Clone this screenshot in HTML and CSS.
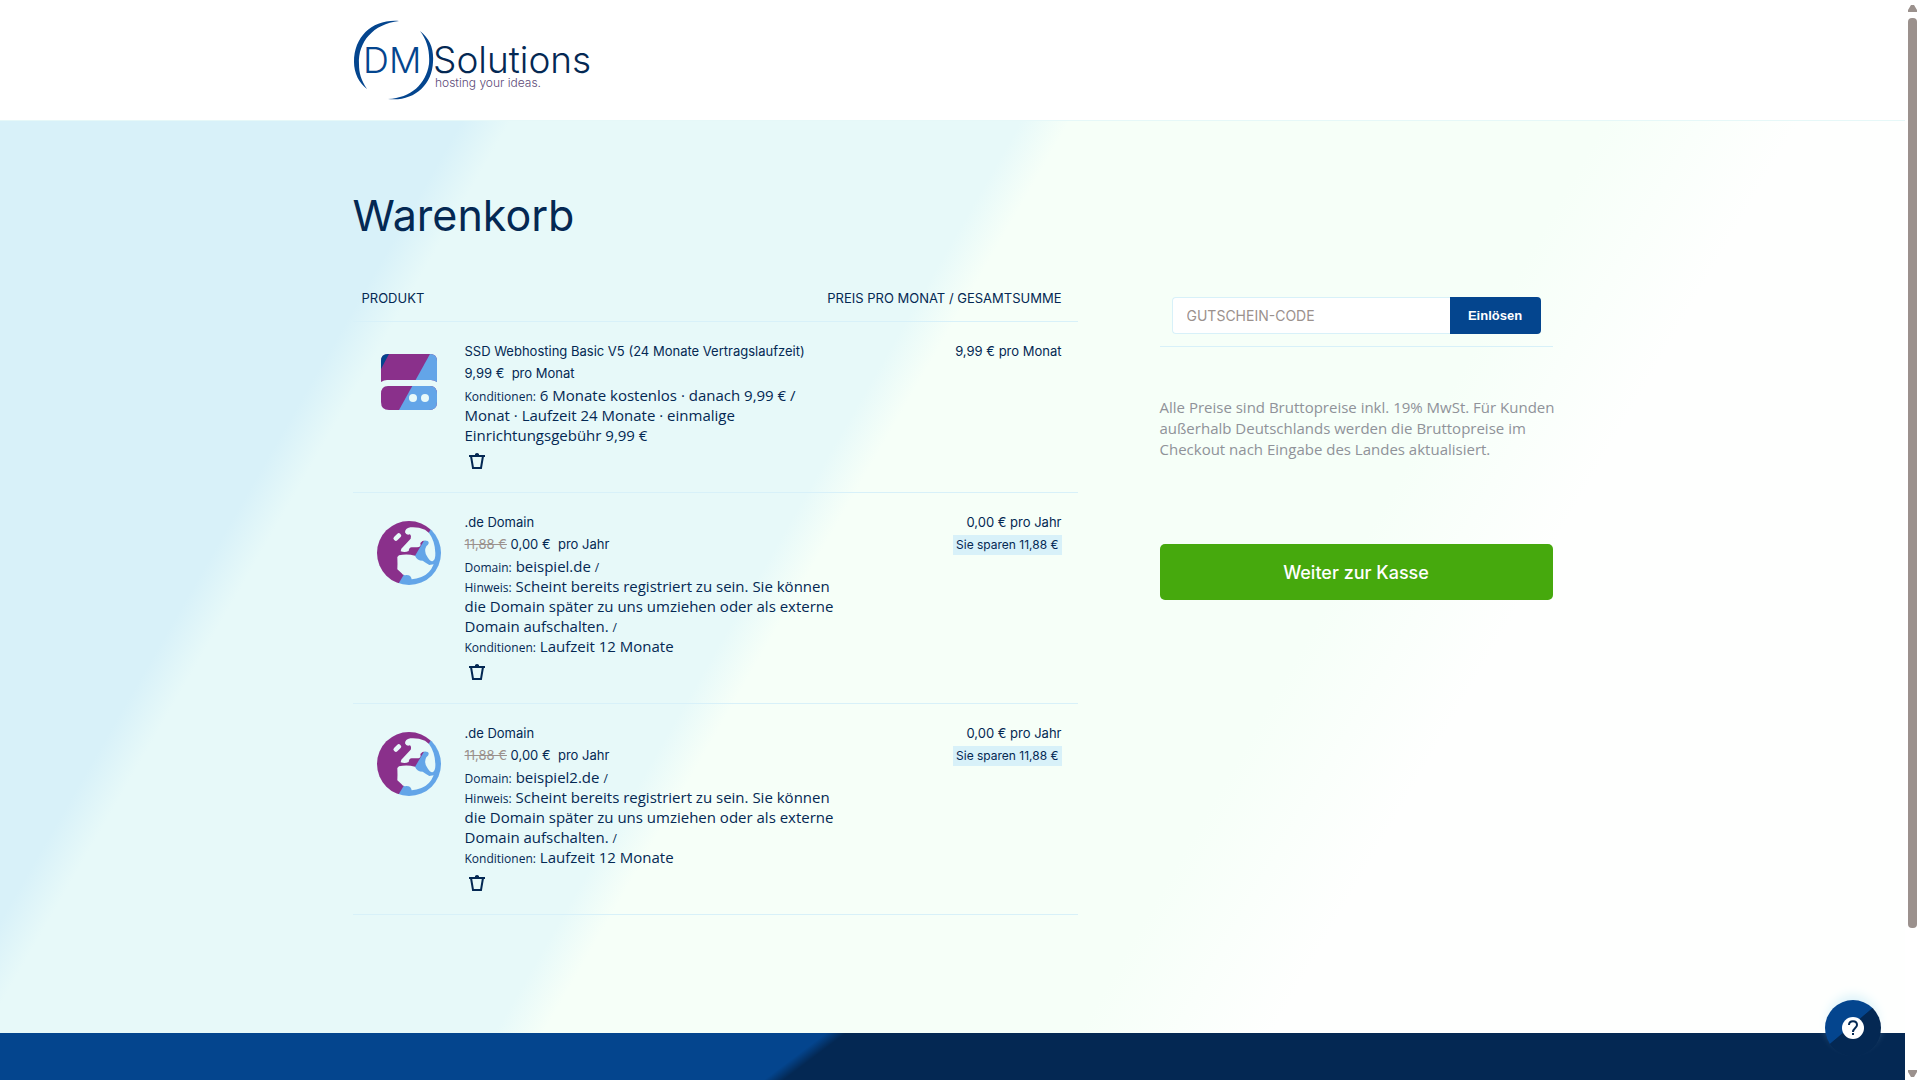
FILE: index.html
```html
<!DOCTYPE html>
<html lang="de">
<head>
<meta charset="utf-8">
<meta name="viewport" content="width=device-width, initial-scale=1">
<title>Warenkorb – DM Solutions</title>
<link rel="stylesheet" href="styles.css">
</head>
<body>
<svg class="sprite" aria-hidden="true">
  <defs>
    <clipPath id="server-shape">
      <path d="M7 0H49Q56 0 56 7V28Q53 26 50 26H6Q3 26 0 28V7Q0 0 7 0Z"/>
      <path d="M7 32H49Q56 32 56 40V48Q56 56 48 56H8Q0 56 0 48V40Q0 32 7 32Z"/>
    </clipPath>
    <clipPath id="globe-shape">
      <circle cx="96" cy="96" r="96"/>
    </clipPath>
    <mask id="globe-land">
      <rect width="192" height="192" fill="#fff"/>
      <rect x="48" y="41" width="26" height="14" rx="6" transform="rotate(-45 61 48)" fill="#000"/>
      <path d="M84 34Q84 22 100 19Q122 17 144 26L156 36Q174 60 175 96Q176 117 166 121Q158 121 150 106Q140 90 148 76Q160 66 152 60Q138 56 130 66Q134 80 118 79L104 79Q96 80 95 90Q84 96 71 91L73 83L101 53Q104 44 99 40Q88 44 84 34Z" fill="#000"/>
      <path d="M66 103Q90 98 114 104Q120 119 137 119Q150 128 157 132L170 130Q158 160 133 168Q118 174 104 175Q102 162 89 162Q76 164 74 157L61 145Q62 130 61 108Z" fill="#000"/>
    </mask>
    <symbol id="server" viewBox="0 0 56 56">
      <g clip-path="url(#server-shape)">
        <path fill="#8a308b" d="M0 0H56V56H0Z"/>
        <path fill="#04458e" d="M0 0H8L0 15Z"/>
        <path fill="#63a5e8" d="M49 0H56V56H18Z"/>
      </g>
      <circle cx="32" cy="44" r="4" fill="#e8f9f9"/>
      <circle cx="44" cy="44" r="4" fill="#e8f9f9"/>
    </symbol>
    <symbol id="globe" viewBox="0 0 192 192">
      <g clip-path="url(#globe-shape)">
        <g mask="url(#globe-land)">
          <path fill="#8a308b" d="M0 0H192V192H0Z"/>
          <path fill="#63a5e8" d="M176 0H192V192H62Z"/>
        </g>
      </g>
    </symbol>
    <symbol id="trash" viewBox="0 0 16 16">
      <path fill="#042853" d="M0 2H6V1Q8 -1 10 1V2H16V4H0Z"/>
      <path fill="none" stroke="#042853" stroke-width="2" d="M2 3L4 15H12L14 3"/>
    </symbol>
  </defs>
</svg>

<div class="page">
  <header class="header">
    <div class="container">
      <a class="logo" href="#" aria-label="DM Solutions">
        <svg width="240" height="82" viewBox="0 0 240 82" aria-hidden="true">
          <path fill="#04458e" d="M46 2C20 0 1 17 1 43C1 54 6 64 14 70C8 61 6 54 6 45C5 23 20 5 46 2Z"/>
          <path fill="#04458e" d="M67 12C77 20 81 30 80 43C79 67 60 83 35 80C58 79 73 65 76 45C77 32 74 21 67 12Z"/>
          <text class="logo-dm" x="10" y="54">DM</text>
          <text class="logo-name" x="80" y="54">Solutions</text>
          <text class="logo-claim" x="82" y="68">hosting your ideas.</text>
        </svg>
      </a>
    </div>
  </header>

  <main class="main">
    <div class="container">
      <h1 class="title">Warenkorb</h1>
      <div class="columns">
        <table class="cart">
          <colgroup>
            <col class="col-icon">
            <col class="col-product">
            <col>
          </colgroup>
          <thead>
            <tr>
              <th class="cart-head" colspan="2" scope="col">PRODUKT</th>
              <th class="cart-head cart-head-price" scope="col"><span class="overhang">PREIS PRO MONAT / GESAMTSUMME</span></th>
            </tr>
          </thead>
          <tbody>
            <tr>
              <td class="cell-icon"><svg class="icon-server"><use href="#server"/></svg></td>
              <td class="cell-product">
                <div class="line">SSD Webhosting Basic V5 (24 Monate Vertragslaufzeit)</div>
                <div class="line">9,99 € &nbsp;pro Monat</div>
                <div class="details"><small>Konditionen:</small> 6 Monate kostenlos · danach 9,99 € /<br>Monat · Laufzeit 24 Monate · einmalige<br>Einrichtungsgebühr 9,99 €</div>
                <button class="remove" type="button" aria-label="Entfernen"><svg class="icon-trash"><use href="#trash"/></svg></button>
              </td>
              <td class="cell-price"><div class="line">9,99 € pro Monat</div></td>
            </tr>
            <tr>
              <td class="cell-icon"><svg class="icon-globe"><use href="#globe"/></svg></td>
              <td class="cell-product">
                <div class="line">.de Domain</div>
                <div class="line"><s>11,88 €</s> 0,00 € &nbsp;pro Jahr</div>
                <div class="details"><small>Domain:</small> beispiel.de <small>/</small><br><small>Hinweis:</small> Scheint bereits registriert zu sein. Sie können die Domain später zu uns umziehen oder als externe Domain aufschalten. <small>/</small><br><small>Konditionen:</small> Laufzeit 12 Monate</div>
                <button class="remove" type="button" aria-label="Entfernen"><svg class="icon-trash"><use href="#trash"/></svg></button>
              </td>
              <td class="cell-price"><div class="line">0,00 € pro Jahr</div><span class="saving">Sie sparen 11,88 €</span></td>
            </tr>
            <tr>
              <td class="cell-icon"><svg class="icon-globe"><use href="#globe"/></svg></td>
              <td class="cell-product">
                <div class="line">.de Domain</div>
                <div class="line"><s>11,88 €</s> 0,00 € &nbsp;pro Jahr</div>
                <div class="details"><small>Domain:</small> beispiel2.de <small>/</small><br><small>Hinweis:</small> Scheint bereits registriert zu sein. Sie können die Domain später zu uns umziehen oder als externe Domain aufschalten. <small>/</small><br><small>Konditionen:</small> Laufzeit 12 Monate</div>
                <button class="remove" type="button" aria-label="Entfernen"><svg class="icon-trash"><use href="#trash"/></svg></button>
              </td>
              <td class="cell-price"><div class="line">0,00 € pro Jahr</div><span class="saving">Sie sparen 11,88 €</span></td>
            </tr>
          </tbody>
        </table>

        <aside class="summary">
          <form class="voucher">
            <input class="voucher-input" type="text" placeholder="GUTSCHEIN-CODE" aria-label="Gutschein-Code">
            <button class="voucher-button" type="button">Einlösen</button>
          </form>
          <p class="note">Alle Preise sind Bruttopreise inkl. 19% MwSt. Für Kunden<br>außerhalb Deutschlands werden die Bruttopreise im<br>Checkout nach Eingabe des Landes aktualisiert.</p>
          <button class="checkout" type="button">Weiter zur Kasse</button>
        </aside>
      </div>
    </div>
  </main>
  <footer class="footer"></footer>
</div>

<div class="scrollbar" aria-hidden="true">
  <svg width="9" height="7" viewBox="0 0 9 7"><path fill="#9b918d" d="M0 7V5L3 0H6L9 5V7Z"/></svg>
  <div class="track"><div class="thumb"></div></div>
  <svg width="9" height="7" viewBox="0 0 9 7"><path fill="#9b918d" d="M0 0V2L3 7H6L9 2V0Z"/></svg>
</div>

<button class="help" type="button" aria-label="Hilfe">
  <svg width="22" height="22" viewBox="0 0 22 22" aria-hidden="true">
    <circle cx="11" cy="11" r="11" fill="#fff"/>
    <path fill="none" stroke="#042853" stroke-width="2" d="M7 8C7 3 15 3 15 8C15 11 11 11 11 15"/>
    <path fill="#042853" d="M10 16H12V18H10Z"/>
  </svg>
</button>
</body>
</html>
```
FILE: styles.css
```css
* {
  box-sizing: border-box;
}

body {
  margin: 0;
  display: flex;
  min-height: 100vh;
  background: #fff;
  color: #042853;
  font-family: Inter, "Liberation Sans", sans-serif;
  font-size: 13px;
  line-height: 22px;
}

button,
input {
  font-family: inherit;
  margin: 0;
  border: 0;
}

button {
  cursor: pointer;
}

.sprite {
  position: absolute;
  width: 0;
  height: 0;
}

.page {
  flex: 1;
  min-width: 0;
  display: flex;
  flex-direction: column;
}

.container {
  max-width: 1200px;
  margin: 0 auto;
}

.header {
  padding: 19px 0;
  border-bottom: 1px solid #e6f8f8;
}

.logo {
  display: block;
  width: 240px;
}

.logo svg {
  display: block;
}

.logo-dm {
  fill: #04458e;
  font-size: 36px;
  font-weight: 300;
}

.logo-name {
  fill: #042853;
  font-size: 37px;
  font-weight: 300;
}

.logo-claim {
  fill: #5c4a78;
  font-size: 12px;
  font-weight: 300;
}

.main {
  padding: 64px 0 118px;
  background: linear-gradient(120deg, #d8f1f9 19%, #e7f9f9 21%, #e7f9f9 42%, #f6fff8 44%, #f6fff8 66%, #fefffe 74%);
}

.title {
  margin: 0 0 40px;
  font-size: 43px;
  font-weight: 400;
  line-height: 60px;
}

.columns {
  display: grid;
  grid-template-columns: 725fr 393fr;
  column-gap: 82px;
  align-items: start;
}

.cart {
  width: 100%;
  table-layout: fixed;
  border-collapse: collapse;
}

.col-icon {
  width: 112px;
}

.col-product {
  width: 380px;
}

.cart th,
.cart td {
  vertical-align: top;
  border-bottom: 1px solid #d8f1f9;
}

.cart-head {
  padding: 2px 0 12px 9px;
  text-align: left;
  font-weight: 400;
}

.cart-head-price {
  padding-right: 16px;
}

.overhang {
  display: flex;
  justify-content: flex-end;
  white-space: nowrap;
}

.cell-icon {
  padding: 28px 0 0 24px;
}

.icon-server,
.icon-globe {
  display: block;
  width: 64px;
  height: 64px;
}

.icon-server {
  padding: 4px;
}

.cell-product {
  padding: 18px 0 19px;
}

.details {
  margin-top: 1px;
  font-family: "Open Sans", sans-serif;
  font-size: 15px;
  line-height: 20px;
}

.details small {
  font-size: 12px;
  line-height: 1px;
}

s {
  color: #9b918d;
}

.remove {
  display: block;
  padding: 4px;
  margin-top: 4px;
  background: none;
}

.icon-trash {
  display: block;
  width: 16px;
  height: 16px;
}

.cell-price {
  padding: 18px 16px 16px 0;
  text-align: right;
}

.saving {
  display: inline-block;
  padding: 0 3px;
  background: #d8f1f9;
  font-size: 12px;
  line-height: 20px;
}

.voucher {
  display: flex;
  padding: 12px;
  border-bottom: 1px solid #d8f1f9;
}

.voucher-input {
  flex: 1;
  min-width: 0;
  height: 37px;
  padding: 0 14px;
  border: 1px solid #d8f1f9;
  border-right: 0;
  border-radius: 4px 0 0 4px;
  background: #fff;
  color: #042853;
  font-size: 14px;
}

.voucher-input::placeholder {
  color: #9b918d;
  opacity: 1;
}

.voucher-button {
  width: 91px;
  border-radius: 0 4px 4px 0;
  background: #04458e;
  color: #fff;
  font-family: "Liberation Sans", Arial, sans-serif;
  font-size: 13px;
  font-weight: 700;
}

.note {
  margin: 50px -8px 84px 0;
  color: #8f9299;
  font-family: "Open Sans", sans-serif;
  font-size: 15px;
  line-height: 21px;
}

.checkout {
  width: 100%;
  height: 56px;
  border-radius: 5px;
  background: #46a90d;
  color: #fff;
  font-size: 18px;
  font-weight: 500;
}

.footer {
  flex: 1;
  min-height: 47px;
  background: linear-gradient(143deg, #04458e 42%, #042853 43%);
}

.scrollbar {
  position: sticky;
  top: 0;
  width: 15px;
  height: 100vh;
  padding: 5px 3px 3px;
  display: flex;
  flex-direction: column;
  gap: 6px;
}

.scrollbar svg {
  display: block;
}

.track {
  flex: 1;
}

.thumb {
  height: 87%;
  border-radius: 4px;
  background: #9b918d;
}

.help {
  position: fixed;
  right: 39px;
  bottom: 24px;
  width: 56px;
  height: 56px;
  padding: 0;
  display: grid;
  place-items: center;
  border-radius: 50%;
  background: linear-gradient(140deg, #04458e 46%, #042853 47%);
  box-shadow: 0 -8px 12px -4px #d8f1f9;
}
```
